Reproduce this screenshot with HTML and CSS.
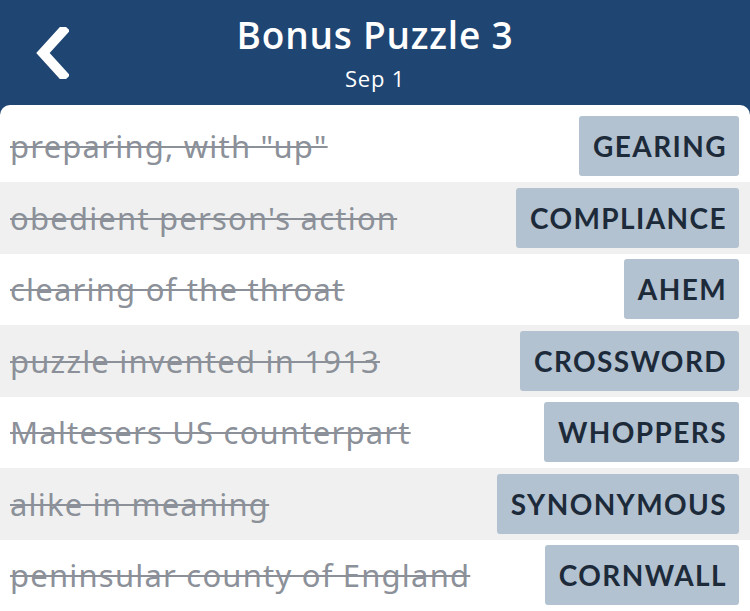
FILE: index.html
```html
<!DOCTYPE html>
<html lang="en">
  <head>
    <meta charset="UTF-8" />
    <meta name="viewport" content="width=device-width, initial-scale=1.0" />
    <title>Bonus Puzzle 3</title>
    <link rel="stylesheet" href="styles.css">
  </head>
  <body>
    <header class="topbar">
      <a class="back" href="#">
        <svg width="34" height="52" viewBox="0 0 34 52">
          <path d="M28 4 L8 26 L28 48" fill="none" stroke="#fff" stroke-width="10" stroke-linecap="square" stroke-linejoin="miter" />
        </svg>
      </a>
      <div class="titles">
        <h1>Bonus Puzzle 3</h1>
        <p>Sep 1</p>
      </div>
    </header>

    <div class="panel">
      <ul class="clues">
        <li><span class="clue">preparing, with "up"</span><span class="answer">GEARING</span></li>
        <li><span class="clue">obedient person's action</span><span class="answer">COMPLIANCE</span></li>
        <li><span class="clue">clearing of the throat</span><span class="answer">AHEM</span></li>
        <li><span class="clue">puzzle invented in 1913</span><span class="answer">CROSSWORD</span></li>
        <li><span class="clue">Maltesers US counterpart</span><span class="answer">WHOPPERS</span></li>
        <li><span class="clue">alike in meaning</span><span class="answer">SYNONYMOUS</span></li>
        <li><span class="clue">peninsular county of England</span><span class="answer">CORNWALL</span></li>
      </ul>
    </div>
  </body>
</html>
```

FILE: styles.css
```css
body {
  margin: 0;
  background-color: #1f4572;
  font-family: "Lato", "Noto Sans", sans-serif;
  overflow: hidden;
}

.topbar {
  height: 105px;
  position: relative;
  display: flex;
  justify-content: center;
  color: #fff;
}

.back {
  position: absolute;
  left: 35px;
  top: 27px;
}

.titles {
  text-align: center;
}

.titles h1 {
  margin: 10px 0 0;
  font-family: "Open Sans", sans-serif;
  font-size: 37px;
  font-weight: 600;
  letter-spacing: 0.8px;
  line-height: 50px;
}

.titles p {
  margin: 3px 0 0;
  font-family: "Open Sans", sans-serif;
  font-size: 22px;
  letter-spacing: 0.8px;
  line-height: 30px;
}

.panel {
  background-color: #fff;
  border-radius: 10px 10px 0 0;
  padding-top: 5.5px;
  height: 506px;
}

.clues {
  list-style: none;
  margin: 0;
  padding: 0;
}

.clues li {
  height: 71.5px;
  display: flex;
  align-items: center;
  justify-content: space-between;
  padding: 0 11px 0 10px;
  box-sizing: border-box;
}

.clues li:nth-child(even) {
  background-color: #f0f0f0;
}

.clue {
  color: #8b9099;
  font-family: "Noto Sans", sans-serif;
  font-size: 31px;
  letter-spacing: 1.2px;
  text-decoration: line-through;
  text-decoration-thickness: 2px;
}

.answer {
  background-color: #b2c2d0;
  color: #1d2a3a;
  font-size: 28px;
  font-weight: 700;
  letter-spacing: 1.4px;
  height: 60px;
  line-height: 60px;
  padding: 0 12px 0 14px;
  border-radius: 3px;
}
```
